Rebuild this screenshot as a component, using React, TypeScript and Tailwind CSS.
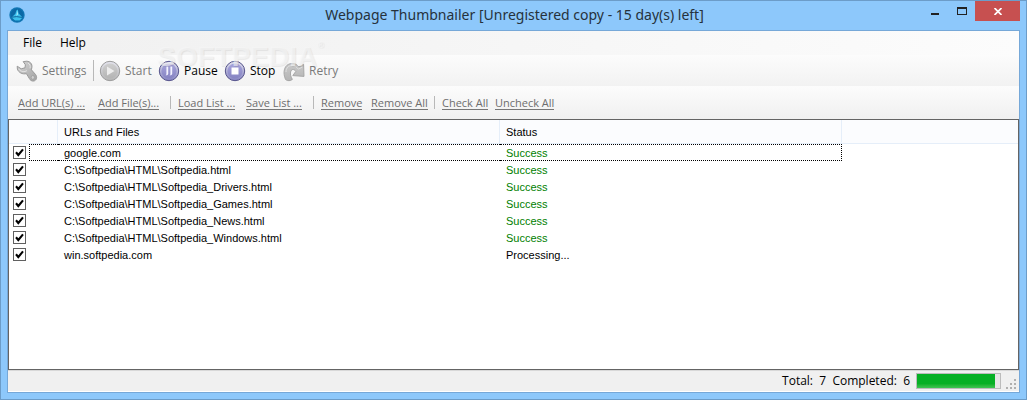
import { ReactNode, useState } from "react";

type Row = { id: number; url: string; status: string; checked: boolean };

const initialRows: Row[] = [
  { id: 1, url: "google.com", status: "Success", checked: true },
  { id: 2, url: "C:\\Softpedia\\HTML\\Softpedia.html", status: "Success", checked: true },
  { id: 3, url: "C:\\Softpedia\\HTML\\Softpedia_Drivers.html", status: "Success", checked: true },
  { id: 4, url: "C:\\Softpedia\\HTML\\Softpedia_Games.html", status: "Success", checked: true },
  { id: 5, url: "C:\\Softpedia\\HTML\\Softpedia_News.html", status: "Success", checked: true },
  { id: 6, url: "C:\\Softpedia\\HTML\\Softpedia_Windows.html", status: "Success", checked: true },
  { id: 7, url: "win.softpedia.com", status: "Processing...", checked: true },
];

function AppIcon() {
  return (
    <svg width="16" height="16" viewBox="0 0 16 16" aria-hidden="true">
      <circle cx="8" cy="8" r="7.7" fill="#1277b4" />
      <circle cx="8" cy="8" r="6.4" fill="#0c69a6" />
      <path d="M2.6 10.6 6.4 6.8 7.4 3.4 8.8 2.6 9.6 6.4 12.9 9.8 13.2 11 10.6 13.4 6 13.6Z" fill="#3cc0ec" />
      <path d="M8.2 3.6 9 7.2 7.4 9Z" fill="#b4f0ff" />
      <path d="M3 10.2 7.5 9.6 13 10.4" stroke="#0b5c93" strokeWidth="0.9" fill="none" />
    </svg>
  );
}

function WrenchIcon() {
  return (
    <svg width="22" height="22" viewBox="0 0 22 22" aria-hidden="true">
      <defs>
        <linearGradient id="wrench" x1="0" y1="0" x2="1" y2="1">
          <stop offset="0" stopColor="#d6d6d6" />
          <stop offset="1" stopColor="#a2a2a2" />
        </linearGradient>
      </defs>
      <path
        d="M7.2 1.6 10.8 1.2C14.2 1.4 16.4 4 15.9 7.4L15.4 9.8 19.6 14.6C21.6 17.2 20.4 20.6 17.8 21 15.6 21.3 14.2 20.2 13.4 18.6L10.4 13.6C6.6 14.6 2.4 12.6 1.4 9L1.2 6.2 5.2 8.8 9 7.8 9.4 4.8Z"
        fill="url(#wrench)"
        stroke="#999"
        strokeWidth="1"
        strokeLinejoin="round"
      />
      <path d="M3 9.2C5 12 8.4 12.2 11 10.6M12 3.2C14 4 14.6 6 14 8.4" stroke="#e4e4e4" strokeWidth="1" fill="none" />
      <ellipse cx="16.8" cy="17.4" rx="1.6" ry="1.9" fill="#cfcfcf" stroke="#999" strokeWidth="0.7" />
    </svg>
  );
}

function RoundIcon({ tone, children }: { tone: "gray" | "violet"; children: ReactNode }) {
  const [light, dark, rim] = tone === "gray" ? ["#cfcfcf", "#b4b4b4", "#9c9c9c"] : ["#a9a6dc", "#8583c2", "#56548c"];
  return (
    <svg width="22" height="22" viewBox="0 0 22 22" aria-hidden="true">
      <defs>
        <linearGradient id={`${tone}-face`} x1="0" y1="0" x2="0" y2="1">
          <stop offset="0" stopColor={light} />
          <stop offset="1" stopColor={dark} />
        </linearGradient>
        <linearGradient id={`${tone}-ring`} x1="0" y1="0" x2="0" y2="1">
          <stop offset="0" stopColor="#e4e4ee" />
          <stop offset="1" stopColor={dark} />
        </linearGradient>
      </defs>
      <circle cx="11" cy="11" r="9.7" fill={`url(#${tone}-ring)`} stroke={rim} strokeWidth="1" />
      <circle cx="11" cy="11" r="7.6" fill={`url(#${tone}-face)`} />
      {children}
    </svg>
  );
}

function RetryIcon() {
  return (
    <svg width="22" height="22" viewBox="0 0 22 22" aria-hidden="true">
      <defs>
        <linearGradient id="retry" x1="0" y1="0" x2="0" y2="1">
          <stop offset="0" stopColor="#cacaca" />
          <stop offset="1" stopColor="#b4b4b4" />
        </linearGradient>
      </defs>
      <path
        d="M2.6 19.6C.6 15 .4 10.4 2.6 6.8 5.4 2.6 12.6 2 15.8 7L20.6 4.4 21 16.4 9.8 15.6 12.8 11.4C11 8.6 8.4 9 7.6 12 7 14.8 8 17 9.4 19.4 7.4 21 4.6 21.2 2.6 19.6Z"
        fill="url(#retry)"
        stroke="#a2a2a2"
        strokeWidth="0.9"
        strokeLinejoin="round"
      />
      <path d="M3 12C3 7.6 6 5.4 9 5.4 12 5.4 13.4 7 15.4 9.2L19.4 7" stroke="#dedede" strokeWidth="1" fill="none" />
    </svg>
  );
}

function ToolButton({
  icon,
  label,
  disabled,
  width,
}: {
  icon: ReactNode;
  label: string;
  disabled?: boolean;
  width: string;
}) {
  return (
    <button
      type="button"
      disabled={disabled}
      className={`flex shrink-0 items-center gap-1 text-black disabled:text-[#7a7a7a] ${width}`}
    >
      {icon}
      {label}
    </button>
  );
}

function LinkButton({ label, width, onClick }: { label: string; width: string; onClick?: () => void }) {
  return (
    <button type="button" onClick={onClick} className={`flex shrink-0 ${width}`}>
      <span className="border-b border-[#777] leading-[13px] whitespace-nowrap">{label}</span>
    </button>
  );
}

function TitleBar() {
  return (
    <header className="flex h-[29px] items-start pl-[2px]">
      <div className="flex w-[114px] pt-[6px]">
        <AppIcon />
      </div>
      <h1 className="flex-1 pt-[3px] pr-4 text-center font-['Noto_Sans',sans-serif] text-[14px] leading-[22px] whitespace-nowrap text-[#26323c]">
        Webpage Thumbnailer [Unregistered copy - 15 day(s) left]
      </h1>
      <div className="flex">
        <button type="button" aria-label="Minimize" className="flex h-5 w-[26px] items-center justify-center">
          <svg width="8" height="8" viewBox="0 0 8 8">
            <path d="M0 6h8v2H0z" fill="#222" />
          </svg>
        </button>
        <button type="button" aria-label="Maximize" className="flex h-5 w-[27px] items-center justify-center">
          <svg width="10" height="8" viewBox="0 0 10 8">
            <path d="M0 0h10v8H0zM1 2v5h8V2z" fill="#222" fillRule="evenodd" />
          </svg>
        </button>
        <button type="button" aria-label="Close" className="flex h-5 w-[45px] items-center justify-center bg-[#c75050]">
          <svg width="8" height="7" viewBox="0 0 8 7">
            <path d="M.5 0 7.5 7M7.5 0 .5 7" stroke="#fff" strokeWidth="1.7" />
          </svg>
        </button>
      </div>
    </header>
  );
}

function CheckBox({ label, checked, onChange }: { label: string; checked: boolean; onChange: () => void }) {
  return (
    <span className="grid size-[13px]">
      <input
        type="checkbox"
        aria-label={label}
        checked={checked}
        onChange={onChange}
        className="peer size-[13px] appearance-none border border-[#606060] bg-white [grid-area:1/1]"
      />
      <svg
        viewBox="0 0 13 13"
        className="pointer-events-none invisible size-[13px] [grid-area:1/1] peer-checked:visible"
        aria-hidden="true"
      >
        <path d="M3 6.3 5.3 9 10 3.4" stroke="#000" strokeWidth="2.1" fill="none" />
      </svg>
    </span>
  );
}

export default function App() {
  const [rows, setRows] = useState(initialRows);

  const setAll = (checked: boolean) => setRows(rows.map((r) => ({ ...r, checked })));
  const toggle = (id: number) => setRows(rows.map((r) => (r.id === id ? { ...r, checked: !r.checked } : r)));
  const completed = rows.filter((r) => r.status === "Success").length;

  return (
    <div className="flex min-h-screen flex-col border border-[#6c9cc8] bg-[#8dc8fb] px-[6px] pb-[6px] font-['Open_Sans','Noto_Sans',sans-serif] text-[12px] text-black">
      <TitleBar />

      <main className="flex flex-1 flex-col border border-[#76a8d8] bg-[#f0f0f0]">
        <nav className="relative flex h-6 items-center bg-linear-to-r from-[#f0f0f0] to-[#fcfcfc] pl-[15px]">
          <button type="button" className="w-[37px] text-left">File</button>
          <button type="button">Help</button>
          {/* watermark */}
          <div className="pointer-events-none absolute top-[10px] left-[149px] z-10 font-['Liberation_Sans',sans-serif] text-[28px] leading-[32px] font-bold whitespace-nowrap text-[#f7f7f7]/60 [text-shadow:1px_1px_1px_rgba(0,0,0,0.07)]">
            SOFTPEDIA
            <sup className="text-[9px] [vertical-align:14px]">®</sup>
          </div>
        </nav>

        <div className="flex h-[31px] items-center bg-linear-to-b from-[#fcfcfc] to-[#f2f2f2] pl-[8px]">
          <ToolButton icon={<WrenchIcon />} label="Settings" width="w-[77px]" disabled />
          <span className="mr-[5px] h-[21px] w-px bg-[#b8b8b8]" />
          <ToolButton
            icon={
              <RoundIcon tone="gray">
                <path d="M8 6.5 15.5 11 8 15.5Z" fill="#ededed" />
              </RoundIcon>
            }
            label="Start"
            width="w-[59px]"
            disabled
          />
          <ToolButton
            icon={
              <RoundIcon tone="violet">
                <path d="M8.4 6.5h1.8v7.4q0 1.4-2.8 1.6 1-.6 1-1.6ZM12.4 6.5h1.8v7.4q0 1.4-2.8 1.6 1-.6 1-1.6Z" fill="#f4f3ff" />
              </RoundIcon>
            }
            label="Pause"
            width="w-[66px]"
          />
          <ToolButton
            icon={
              <RoundIcon tone="violet">
                <path d="M7.5 7.5h7v7h-7z" fill="#fff" />
              </RoundIcon>
            }
            label="Stop"
            width="w-[59px]"
          />
          <ToolButton icon={<RetryIcon />} label="Retry" width="w-[60px]" disabled />
        </div>

        <div className="flex h-[33px] items-center bg-linear-to-b from-[#fcfcfc] to-[#f0f0f0] pl-[10px] text-[11px] text-[#6e6e6e]">
          <LinkButton label="Add URL(s) ..." width="w-[80px]" />
          <LinkButton label="Add File(s)..." width="w-[72px]" />
          <span className="mr-[7px] h-[13px] w-px bg-[#b8b8b8]" />
          <LinkButton label="Load List ..." width="w-[68px]" />
          <LinkButton label="Save List ..." width="w-[67px]" />
          <span className="mr-[7px] h-[13px] w-px bg-[#b8b8b8]" />
          <LinkButton label="Remove" width="w-[50px]" />
          <LinkButton label="Remove All" width="w-[63px]" onClick={() => setRows([])} />
          <span className="mr-[7px] h-[13px] w-px bg-[#b8b8b8]" />
          <LinkButton label="Check All" width="w-[53px]" onClick={() => setAll(true)} />
          <LinkButton label="Uncheck All" width="w-[60px]" onClick={() => setAll(false)} />
        </div>

        <section className="flex-1 border border-[#646464] bg-white font-['Liberation_Sans',sans-serif] text-[11px]">
          <table className="w-full table-fixed border-separate border-spacing-0">
            <colgroup>
              <col className="w-[20px]" />
              <col className="w-[29px]" />
              <col className="w-[442px]" />
              <col className="w-[342px]" />
              <col />
            </colgroup>
            <thead>
              <tr className="h-6 bg-[#fbfcfe] text-left">
                <th colSpan={2} aria-label="Selected" className="border-r border-b border-[#e5eef9] p-0" />
                <th className="border-r border-b border-[#e5eef9] pt-[2px] pr-0 pb-0 pl-[6px] font-normal">
                  URLs and Files
                </th>
                <th className="border-r border-b border-[#e5eef9] pt-[2px] pr-0 pb-0 pl-[6px] font-normal">Status</th>
                <th aria-label="Spare" className="border-b border-[#e5eef9] p-0" />
              </tr>
            </thead>
            <tbody>
              {rows.map((row, i) => {
                const line = i === 0 ? "border-black" : "border-transparent";
                return (
                  <tr key={row.id} className="h-[17px] leading-[13px]">
                    <td className="p-0 pl-[4px]">
                      <CheckBox label={row.url} checked={row.checked} onChange={() => toggle(row.id)} />
                    </td>
                    <td className={`border-y border-l border-dotted p-0 ${line}`} />
                    <td className={`border-y border-dotted pt-[2px] pr-0 pb-0 pl-[6px] ${line}`}>{row.url}</td>
                    <td
                      className={`border-y border-r border-dotted pt-[2px] pr-0 pb-0 pl-[6px] ${line} ${
                        row.status === "Success" ? "text-[#008000]" : "text-black"
                      }`}
                    >
                      {row.status}
                    </td>
                    <td className="p-0" />
                  </tr>
                );
              })}
            </tbody>
          </table>
        </section>

        <footer className="flex h-[22px] items-center justify-end border-t border-b border-t-[#d8d8d8] border-b-white bg-[#f0f0f0] pr-[2px]">
          <span className="pr-[6px] whitespace-pre">Total:  {rows.length}  Completed:  {completed}</span>
          <div
            role="progressbar"
            aria-label="Progress"
            aria-valuenow={93}
            className="h-4 w-[85px] border border-[#bcbcbc] bg-[#e6e6e6]"
          >
            <div className="h-full w-[94%] bg-linear-to-b from-[#06b025] from-70% to-[#3cc452]" />
          </div>
          <svg width="12" height="12" viewBox="0 0 12 12" className="mt-[5px] ml-[4px]" aria-hidden="true">
            <path
              d="M9 1h2v2H9zM9 5h2v2H9zM9 9h2v2H9zM5 5h2v2H5zM5 9h2v2H5zM1 9h2v2H1z"
              fill="#b0b0b0"
            />
          </svg>
        </footer>
      </main>
    </div>
  );
}
